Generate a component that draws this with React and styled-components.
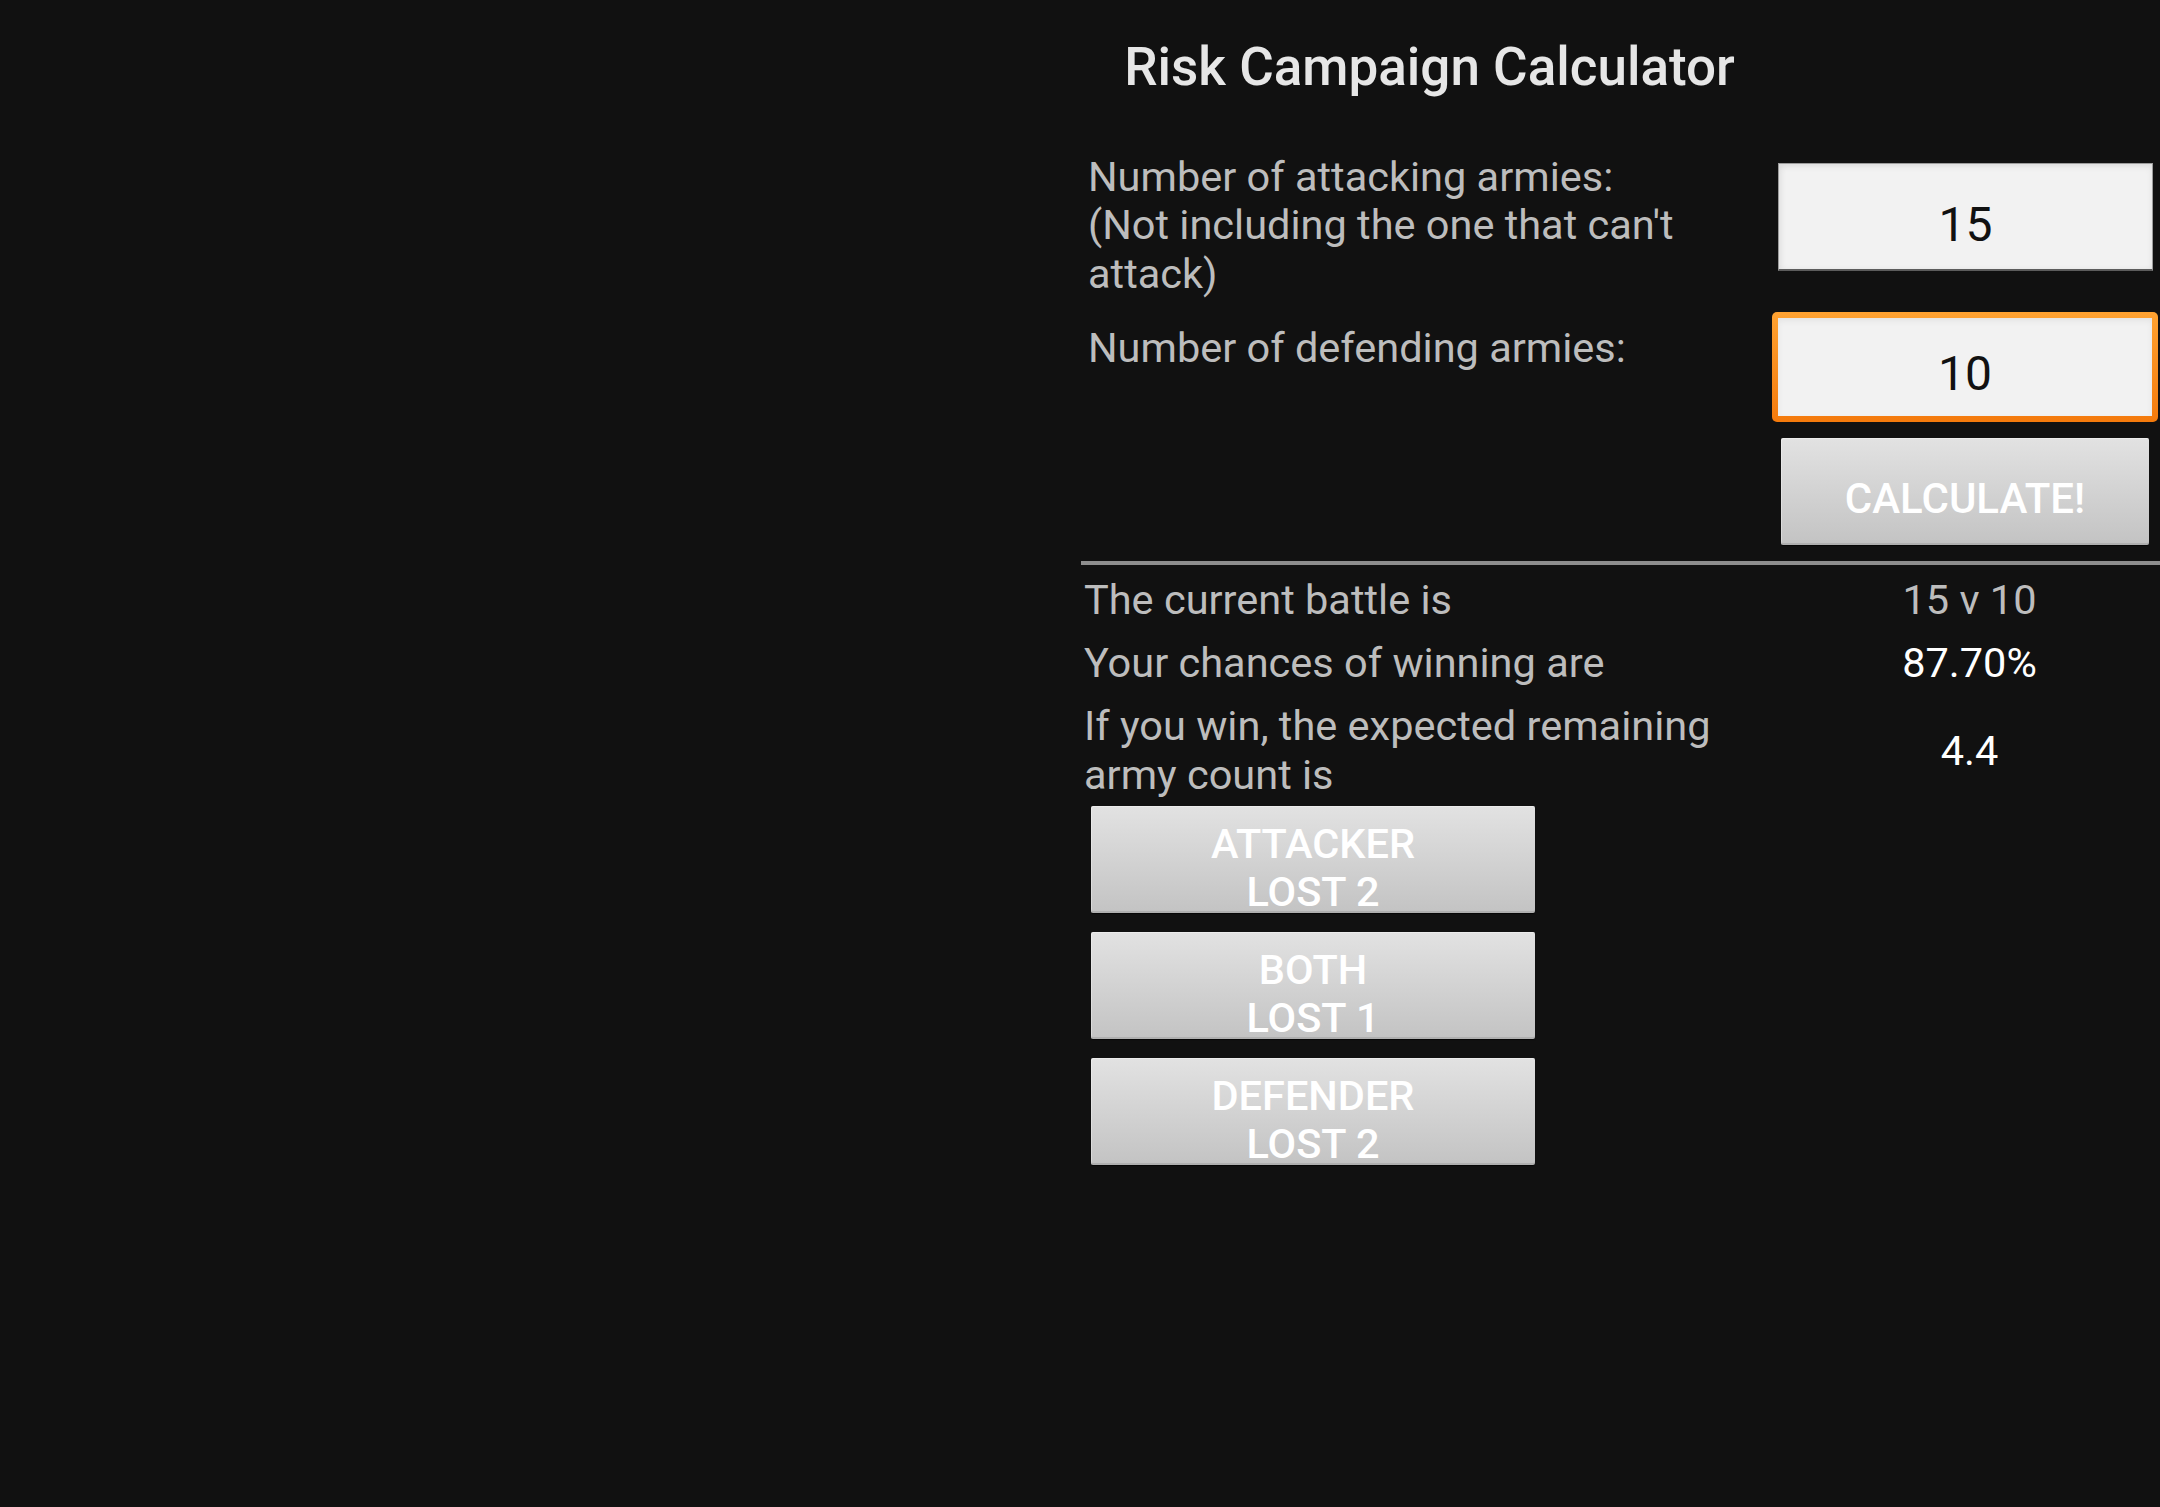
import React from "react";
import styled, { createGlobalStyle, css } from "styled-components";

const GlobalStyle = createGlobalStyle`
  html, body {
    margin: 0;
    padding: 0;
    background: #111111;
  }
  body {
    font-family: Roboto, "Noto Sans", "Liberation Sans", sans-serif;
    color: #bdbdbd;
  }
  * { box-sizing: border-box; }
`;

const Page = styled.div`
  display: grid;
  grid-template-columns: 1081px 1fr;
  min-height: 1507px;
  background: #111111;
`;

const EmptyPane = styled.div``;

const Pane = styled.main`
  display: flex;
  flex-direction: column;
`;

const Form = styled.section`
  display: grid;
  grid-template-columns: 683px 386px;
  padding-left: 7px;
  align-items: start;
`;

const Title = styled.h1`
  grid-column: 1;
  margin: 36px 0 54.6px;
  font-family: Roboto, "Noto Sans", sans-serif;
  font-size: 53px;
  line-height: 62px;
  font-weight: 500;
  color: #e6e6e6;
  text-align: center;
  white-space: nowrap;
`;

const Label = styled.label`
  grid-column: 1;
  margin-top: ${(p) => p.$top || 0}px;
  font-size: 41.5px;
  line-height: 48.5px;
  color: #bdbdbd;
  padding-right: 8px;
`;

const Cell = styled.div`
  grid-column: 2;
  margin-top: ${(p) => p.$top || 0}px;
  height: ${(p) => p.$h || 110}px;
`;

const unfocused = css`
  width: 375px;
  height: 108px;
  margin: 1px 5px 1px 7px;
  padding-top: 17px;
  border: 1px solid #9c9c9c;
  border-bottom: 2px solid #5c5c5c;
  background: #f2f2f2;
  box-shadow: inset 0 3px 6px rgba(0, 0, 0, 0.07), inset 3px 0 6px rgba(0, 0, 0, 0.04);
`;

const focused = css`
  width: 386px;
  height: 110px;
  margin-left: 1px;
  padding-top: 15px;
  border: 6px solid transparent;
  border-radius: 5px;
  background:
    linear-gradient(#f2f2f2, #f2f2f2) padding-box,
    linear-gradient(#ffa231, #f47a0c) border-box;
  box-shadow: inset 0 3px 6px rgba(0, 0, 0, 0.06);
`;

const Field = styled.input`
  display: block;
  font-family: Roboto, "Noto Sans", sans-serif;
  font-size: 48px;
  color: #111111;
  text-align: center;
  outline: none;
  border-radius: 0;
  ${(p) => (p.$focused ? focused : unfocused)}
`;

const GrayButton = styled.button`
  display: flex;
  flex-direction: column;
  align-items: center;
  justify-content: flex-start;
  width: ${(p) => p.$w}px;
  height: 107px;
  margin-left: ${(p) => p.$ml || 0}px;
  padding: ${(p) => p.$pt}px 0 0;
  border: none;
  border-radius: 2px;
  background: linear-gradient(#e2e2e2, #c3c3c3);
  box-shadow: 0 1px 1px rgba(0, 0, 0, 0.6), inset 0 -2px 0 rgba(0, 0, 0, 0.1),
    inset 1px 1px 0 rgba(255, 255, 255, 0.35);
  font-family: Roboto, "Noto Sans", sans-serif;
  font-size: ${(p) => p.$fs || 41.5}px;
  line-height: 48px;
  font-weight: 500;
  color: #ffffff;
  text-transform: uppercase;
  overflow: visible;
  cursor: pointer;
`;

const Line = styled.span`
  display: block;
  white-space: nowrap;
`;

const Divider = styled.hr`
  margin: 16px 0 0;
  height: 4px;
  border: none;
  background: #8e8e8e;
`;

const Results = styled.section`
  display: grid;
  grid-template-columns: 695px 1fr;
  row-gap: 14px;
  margin-top: 10.3px;
  padding-left: 3px;
  align-items: center;
`;

const ResultLabel = styled.div`
  font-size: 41.5px;
  line-height: 49px;
  color: #bdbdbd;
  padding-right: 8px;
`;

const ResultValue = styled.div`
  font-size: 41.5px;
  line-height: 49px;
  text-align: center;
  color: ${(p) => (p.$bright ? "#ffffff" : "#bdbdbd")};
`;

const ButtonStack = styled.div`
  display: flex;
  flex-direction: column;
  gap: 19px;
  margin-top: 7px;
  padding-left: 10px;
`;

const results = [
  { label: "The current battle is", value: "15 v 10", bright: false },
  { label: "Your chances of winning are", value: "87.70%", bright: true },
  { label: "If you win, the expected remaining army count is", value: "4.4", bright: true },
];

const outcomes = [
  ["ATTACKER", "LOST 2"],
  ["BOTH", "LOST 1"],
  ["DEFENDER", "LOST 2"],
];

export default function App() {
  return (
    <>
      <GlobalStyle />
      <Page>
        <EmptyPane />
        <Pane>
          <Form>
            <Title>Risk Campaign Calculator</Title>
            <Label>
              Number of attacking armies:
              <br />
              (Not including the one that can't attack)
            </Label>
            <Cell $top={9.4}>
              <Field defaultValue="15" />
            </Cell>
            <Label $top={25.5}>Number of defending armies:</Label>
            <Cell $top={13.9}>
              <Field $focused defaultValue="10" />
            </Cell>
            <Cell $top={16} $h={107}>
              <GrayButton $w={368} $ml={10} $pt={37} $fs={42}>
                <Line>Calculate!</Line>
              </GrayButton>
            </Cell>
          </Form>
          <Divider />
          <Results>
            {results.map((r) => (
              <React.Fragment key={r.label}>
                <ResultLabel>{r.label}</ResultLabel>
                <ResultValue $bright={r.bright}>{r.value}</ResultValue>
              </React.Fragment>
            ))}
          </Results>
          <ButtonStack>
            {outcomes.map(([a, b]) => (
              <GrayButton key={a + b} $w={444} $pt={14}>
                <Line>{a}</Line>
                <Line>{b}</Line>
              </GrayButton>
            ))}
          </ButtonStack>
        </Pane>
      </Page>
    </>
  );
}
